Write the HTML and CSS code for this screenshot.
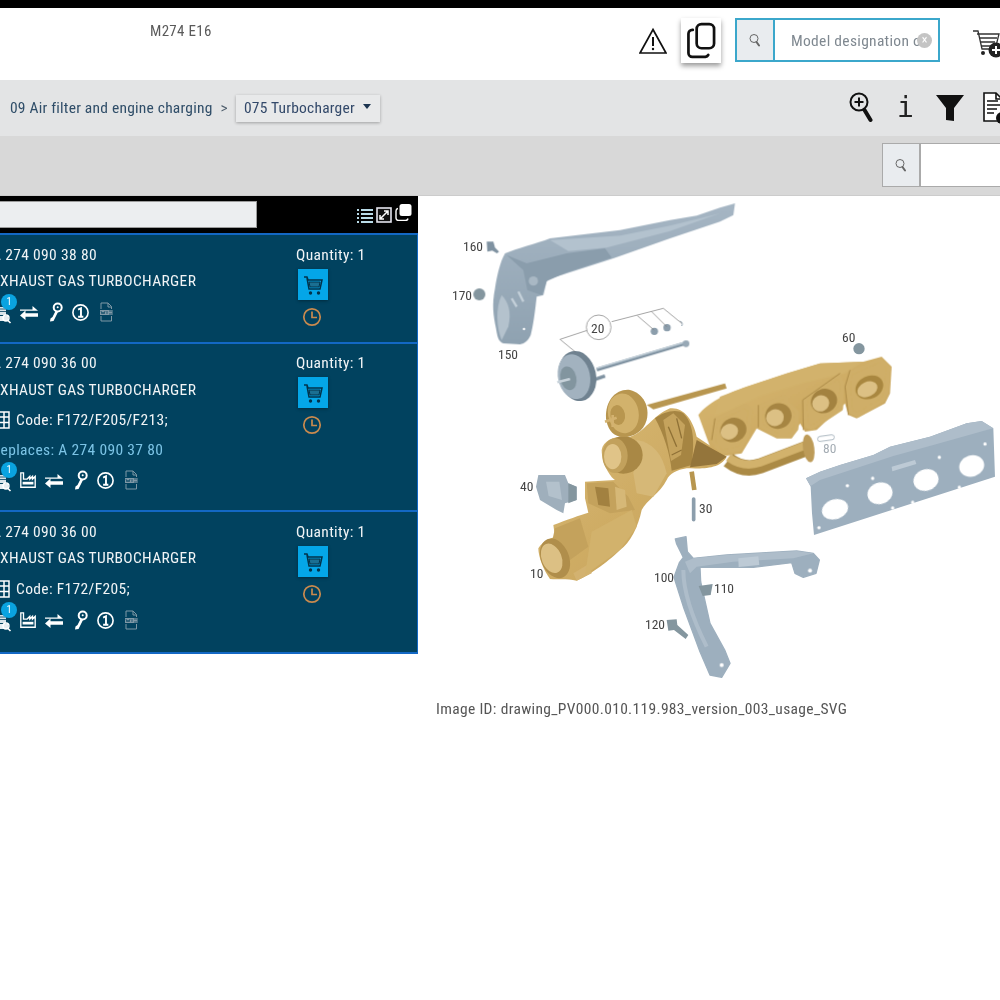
FILE: index.html
```html
<!DOCTYPE html>
<html lang="en">
<head>
<meta charset="utf-8">
<title>Turbocharger parts</title>
<link rel="stylesheet" href="styles.css">
</head>
<body>
<svg class="defs" width="0" height="0" aria-hidden="true">
  <defs>
    <symbol id="i-search" viewBox="0 0 16 16"><circle cx="7" cy="6.500" r="4" fill="none" stroke="currentColor" stroke-width="1"/><path d="M9.500 10l2.500 3.500" stroke="currentColor" stroke-width="2" stroke-linecap="round"/></symbol>
    <symbol id="i-cart" viewBox="0 0 30 30"><path d="M6 7h3l1 3h14l-2 9H11L9 8" fill="none" stroke="#02324a" stroke-width="1.500"/><path d="M11 12h11l-1 5H12z" fill="#1b6f92" stroke="#02324a" stroke-width="1"/><circle cx="12.500" cy="23" r="1.700" fill="#02324a"/><circle cx="20.500" cy="23" r="1.700" fill="#02324a"/></symbol>
    <symbol id="i-clock" viewBox="0 0 20 20"><circle cx="10" cy="10" r="8.200" fill="none" stroke="#c98a4e" stroke-width="1.700"/><path d="M10 4.500V10.500H15" fill="none" stroke="#c98a4e" stroke-width="1.700"/></symbol>
    <symbol id="i-swap" viewBox="0 0 18 18"><path d="M0 6.500h12.500V3L18 7.700H0zM18 10.300H5.500V7.500L0 12.500l5.500 4.500v-3.200H18z" fill="#fff"/></symbol>
    <symbol id="i-key" viewBox="0 0 14 20"><circle cx="8.700" cy="5.500" r="4" fill="none" stroke="#fff" stroke-width="2"/><circle cx="8.700" cy="5.200" r="1" fill="#fff"/><path d="M6.500 9L3.500 15l-2 1.500L1 19.500l3.500-.5L9 10z" fill="#fff"/></symbol>
    <symbol id="i-one" viewBox="0 0 20 20"><circle cx="10" cy="10" r="8" fill="none" stroke="#fff" stroke-width="1.700"/><path d="M7.500 7l3-1.500V14M7.500 14.500h5.500" fill="none" stroke="#fff" stroke-width="2"/></symbol>
    <symbol id="i-wis" viewBox="0 0 14 20"><path d="M2 7V1h7l3.500 3.500V7M2 14v5h10.500v-5" fill="none" stroke="#7f98a6" stroke-width="1"/><path d="M9 1v4h3.500" fill="none" stroke="#7f98a6" stroke-width="1"/><rect x="1" y="8" width="12.500" height="5" fill="#7f98a6"/><path d="M2 9l1 3 1-2 1 2 1-3M8 9v3M10 9h3M10 12h3" stroke="#02415e" stroke-width=".7" fill="none"/></symbol>
    <symbol id="i-factory" viewBox="0 0 20 20"><path d="M2 2v16h16V6l-3 3V6l-3 3V6l-3 3H5V2z" fill="none" stroke="#fff" stroke-width="1.500"/><path d="M4 12h12v3H4z" fill="#fff"/></symbol>
    <symbol id="i-grid" viewBox="0 0 12 18"><path d="M1 1h10v16H1zM1 6h10M1 11.500h10M6 1v16" fill="none" stroke="#fff" stroke-width="1.500"/></symbol>
    <symbol id="i-parts" viewBox="0 0 16 20"><path d="M1 3h9v8H1z" fill="#d8e3e9"/><path d="M1 5h9M1 7.500h9" stroke="#02415e" stroke-width=".8"/><path d="M0 12h12v5H0z" fill="#e6edf1"/><circle cx="10" cy="14" r="3" fill="none" stroke="#fff" stroke-width="1.400"/><path d="M12 16.500l2.500 2.500" stroke="#fff" stroke-width="1.600"/></symbol>
  </defs>
</svg>
<div class="page">
  <div class="topline"></div>
  <header class="header">
    <div class="model">M274 E16</div>
    <div class="actions">
      <svg class="warn" viewBox="0 0 28 28"><path d="M14 2.500L27 26H1z" fill="none" stroke="#111" stroke-width="1.700"/><path d="M14 10v9" stroke="#111" stroke-width="2"/><circle cx="14" cy="22" r="1.200" fill="#111"/></svg>
      <button class="copybtn"><svg viewBox="0 0 30 38" class="copyicon"><rect x="10" y="1.500" width="18" height="25" rx="5" fill="none" stroke="#111" stroke-width="2.800"/><path d="M6 7.500h-.5A4 4 0 0 0 1.500 11.500v20A4 4 0 0 0 5.500 35.500h13.500a4 4 0 0 0 3-2" fill="none" stroke="#111" stroke-width="2.800" stroke-linecap="round"/></svg></button>
      <div class="searchbox">
        <span class="searchcell"><svg class="s16"><use href="#i-search"/></svg></span>
        <span class="placeholder">Model designation o</span>
        <span class="clear">×</span>
      </div>
      <svg class="addcart" viewBox="0 0 32 28"><path d="M0 1h5l4 18h15" fill="none" stroke="#333" stroke-width="1.300"/><path d="M4 4h22l-3 12H8" fill="none" stroke="#333" stroke-width="1.300"/><path d="M7 8h17M8 12h14" stroke="#333" stroke-width="1.300"/><circle cx="10" cy="23" r="2" fill="#222"/><circle cx="23" cy="20" r="7.500" fill="#222"/><path d="M23 16v8M19 20h8" stroke="#fff" stroke-width="2"/></svg>
    </div>
  </header>
  <nav class="crumbs">
    <span class="crumb">09 Air filter and engine charging</span>
    <span class="sep">&gt;</span>
    <span class="drop">075 Turbocharger<i class="caret"></i></span>
    <div class="tools">
      <svg class="t-zoom" viewBox="0 0 24 32"><circle cx="10" cy="10" r="8.500" fill="none" stroke="#111" stroke-width="2"/><path d="M10 5.500v9M5.500 10h9" stroke="#111" stroke-width="2"/><path d="M15.500 18l6 10" stroke="#111" stroke-width="4" stroke-linecap="round"/></svg>
      <span class="t-info">i</span>
      <svg class="t-funnel" viewBox="0 0 28 28"><path d="M0 1h28L18 14v13l-8-1V14z" fill="#111"/></svg>
      <svg class="t-doc" viewBox="0 0 24 32"><path d="M1 1h12l6 6v22H1z" fill="#fff" stroke="#111" stroke-width="1.600"/><path d="M13 1v6h6M4 9h11M4 13h13M4 17h10M4 21h7" fill="none" stroke="#111" stroke-width="1.600"/><circle cx="19" cy="26" r="6" fill="#111"/></svg>
    </div>
  </nav>
  <div class="filterbar">
    <div class="filtersearch">
      <span class="searchcell plain"><svg class="s16"><use href="#i-search"/></svg></span>
    </div>
  </div>
  <main class="content">
    <section class="panel">
      <div class="paneltop">
        <div class="panelinput"></div>
        <svg class="pi" viewBox="0 0 16 16"><path d="M0 2h2v2H0zM4 2h12v2H4zM0 6h2v2H0zM4 6h12v2H4zM0 10h2v2H0zM4 10h12v2H4zM0 14h2v2H0zM4 14h12v2H4z" fill="#b9dbe8"/></svg>
        <svg class="pi" viewBox="0 0 16 16"><rect x="1" y="1" width="14" height="14" fill="#111" stroke="#e4e4ee" stroke-width="1.600"/><path d="M4 12L12 4M8 4h4v4M4 8v4h4" stroke="#fff" stroke-width="1.500" fill="none"/></svg>
        <svg class="pi pi-last" viewBox="0 0 17 17"><path d="M3 4.500A2.500 2.500 0 0 0 1 7v7a2.500 2.500 0 0 0 2.500 2.500h7a2.500 2.500 0 0 0 2.500-2" fill="none" stroke="#fff" stroke-width="1.400"/><rect x="4.500" y="0" width="12" height="12" rx="2.500" fill="#fff"/></svg>
      </div>

      <article class="item item-a">
        <div class="info">
          <div class="line">A 274 090 38 80</div>
          <div class="line">EXHAUST GAS TURBOCHARGER</div>
          <div class="icons">
            <span class="partsicon"><svg class="ic16"><use href="#i-parts"/></svg><b class="badge">1</b></span>
            <svg class="ic18"><use href="#i-swap"/></svg>
            <svg class="ic-key"><use href="#i-key"/></svg>
            <svg class="ic-one"><use href="#i-one"/></svg>
            <svg class="ic-wis"><use href="#i-wis"/></svg>
          </div>
        </div>
        <div class="order">
          <div class="line">Quantity: 1</div>
          <button class="buy buy-a"><svg class="ic-cart"><use href="#i-cart"/></svg></button>
          <svg class="ic-clock"><use href="#i-clock"/></svg>
        </div>
      </article>

      <article class="item item-b">
        <div class="info">
          <div class="line">A 274 090 36 00</div>
          <div class="line">EXHAUST GAS TURBOCHARGER</div>
          <div class="line code"><svg class="ic-grid"><use href="#i-grid"/></svg>Code: F172/F205/F213;</div>
          <div class="line replaces">Replaces: A 274 090 37 80</div>
          <div class="icons">
            <span class="partsicon"><svg class="ic16"><use href="#i-parts"/></svg><b class="badge">1</b></span>
            <svg class="ic-factory"><use href="#i-factory"/></svg>
            <svg class="ic18"><use href="#i-swap"/></svg>
            <svg class="ic-key"><use href="#i-key"/></svg>
            <svg class="ic-one"><use href="#i-one"/></svg>
            <svg class="ic-wis"><use href="#i-wis"/></svg>
          </div>
        </div>
        <div class="order">
          <div class="line">Quantity: 1</div>
          <button class="buy"><svg class="ic-cart"><use href="#i-cart"/></svg></button>
          <svg class="ic-clock"><use href="#i-clock"/></svg>
        </div>
      </article>

      <article class="item item-c">
        <div class="info">
          <div class="line">A 274 090 36 00</div>
          <div class="line">EXHAUST GAS TURBOCHARGER</div>
          <div class="line code"><svg class="ic-grid"><use href="#i-grid"/></svg>Code: F172/F205;</div>
          <div class="icons">
            <span class="partsicon"><svg class="ic16"><use href="#i-parts"/></svg><b class="badge">1</b></span>
            <svg class="ic-factory"><use href="#i-factory"/></svg>
            <svg class="ic18"><use href="#i-swap"/></svg>
            <svg class="ic-key"><use href="#i-key"/></svg>
            <svg class="ic-one"><use href="#i-one"/></svg>
            <svg class="ic-wis"><use href="#i-wis"/></svg>
          </div>
        </div>
        <div class="order">
          <div class="line">Quantity: 1</div>
          <button class="buy"><svg class="ic-cart"><use href="#i-cart"/></svg></button>
          <svg class="ic-clock"><use href="#i-clock"/></svg>
        </div>
      </article>
    </section>

    <figure class="figure">
      <svg class="drawing" viewBox="418 196 582 500">
        <defs>
          <linearGradient id="gold" x1="0" y1="0" x2="1" y2="1"><stop offset="0" stop-color="#d8b974"/><stop offset=".6" stop-color="#cdaa62"/><stop offset="1" stop-color="#b8944f"/></linearGradient>
          <linearGradient id="steel" x1="0" y1="0" x2="0" y2="1"><stop offset="0" stop-color="#a6b6c4"/><stop offset="1" stop-color="#8fa2b1"/></linearGradient>
          <filter id="soft" x="-5%" y="-5%" width="110%" height="110%"><feGaussianBlur stdDeviation="1.200"/></filter>
        </defs>

        <!-- upper-left group -->
        <g transform="translate(440 195) scale(.33333)" filter="url(#soft)">
          <path d="M195 175C230 160 290 145 330 130L540 105 690 75 770 62 840 38 885 25 880 60 840 80 690 130 520 190 380 235C350 245 325 250 320 260L310 300 290 305C285 350 280 390 272 420 265 435 255 445 240 448L190 445C175 440 172 425 168 400 160 360 155 330 165 280 170 245 180 200 195 175Z" fill="url(#steel)"/>
          <path d="M200 180L250 225 262 285 305 300 320 258 380 232 515 188 495 160 380 175 260 205Z" fill="#8a9dac"/>
          <path d="M330 135L540 122 690 92 840 55 690 108 500 158 385 168Z" fill="#b3c2ce"/>
          <path d="M185 300C205 320 215 350 205 395L185 435C170 400 165 340 185 300Z" fill="#b4c2cd"/>
          <path d="M215 310l15 25M235 290l15 30" stroke="#c5d1da" stroke-width="7"/>
          <circle cx="280" cy="258" r="14" fill="#a9b8c4"/>
          <path d="M140 140h20l5 18 12 12-6 5-14-8-15 3z" fill="#7f92a1"/>
          <circle cx="118" cy="298" r="18" fill="#84969f"/>
          <path d="M470 524L735 445" stroke="#7f92a1" stroke-width="11"/>
          <path d="M470 520L735 442" stroke="#bccad4" stroke-width="4"/>
          <circle cx="738" cy="446" r="10" fill="#98a9b6"/>
          <path d="M460 555l35-12" stroke="#7f92a1" stroke-width="10"/>
          <ellipse cx="412" cy="543" rx="56" ry="76" transform="rotate(-12 412 543)" fill="#6f8290"/>
          <ellipse cx="402" cy="545" rx="48" ry="68" transform="rotate(-12 402 545)" fill="#a2b2bf"/>
          <ellipse cx="385" cy="550" rx="24" ry="36" transform="rotate(-12 385 550)" fill="#82959f"/>
          <path d="M352 562l38-10" stroke="#c7d2da" stroke-width="8"/>
          <circle cx="643" cy="409" r="11" fill="#8c9eac"/>
          <circle cx="681" cy="398" r="11" fill="#8c9eac"/>
          <path d="M720 378a10 10 0 0 1 5 15" fill="none" stroke="#8c9eac" stroke-width="3"/>
        </g>
        <g transform="translate(440 195) scale(.33333)">
          <circle cx="252" cy="402" r="3.500" fill="#fff"/>
          <path d="M360 433L475 395M515 380L670 340 725 385M592 362L642 405M635 350L680 395M360 433L405 470" fill="none" stroke="#777" stroke-width="2"/>
          <circle cx="476" cy="397" r="37" fill="#fff" stroke="#777" stroke-width="2"/>
        </g>

        <!-- lower group -->
        <g transform="translate(520 340) scale(.33333)" filter="url(#soft)">
          <path d="M380 195L615 130 620 145 400 208Z" fill="#b8964f"/>

          <!-- manifold -->
          <path d="M535 225C560 190 620 160 680 140L800 100 900 70 1030 65 1085 50 1115 80 1110 160 1095 190 1010 235 985 225 975 190 890 270 855 275 840 250 815 295 770 295 710 265 665 340 600 350 570 320Z" fill="url(#gold)"/>
          <path d="M600 170L680 140 800 100 900 70 1030 65 975 100 850 130 720 170 640 210 580 230Z" fill="#d2b26c"/>
          <g fill="#cfae67" stroke="#cfae67" stroke-width="14" stroke-linejoin="round">
            <path d="M992 100L1080 60 1106 82 1100 160 1088 182 1012 226 992 216 985 140Z"/>
            <path d="M857 175L958 108 968 132 962 206 875 264 860 258 855 210Z"/>
            <path d="M722 200L790 172 832 218 828 266 812 287 772 287 722 256Z"/>
            <path d="M587 240L675 198 692 213 683 288 660 328 604 338 580 306Z"/>
          </g>
          <g fill="none" stroke="#ad8b47" stroke-width="3">
            <path d="M985 225L975 140 990 90M850 270L848 180 960 100M715 262L715 195M575 300L585 235"/>
          </g>
          <ellipse cx="1048" cy="142" rx="43" ry="34" transform="rotate(-25 1048 142)" fill="#a9873f"/>
          <ellipse cx="1042" cy="148" rx="32" ry="22" transform="rotate(-25 1042 148)" fill="#dcc084"/>
          <ellipse cx="912" cy="183" rx="40" ry="36" transform="rotate(-25 912 183)" fill="#a38240"/>
          <ellipse cx="902" cy="190" rx="26" ry="24" transform="rotate(-25 902 190)" fill="#dcc084"/>
          <ellipse cx="775" cy="228" rx="40" ry="38" transform="rotate(-25 775 228)" fill="#a68543"/>
          <ellipse cx="765" cy="233" rx="27" ry="25" transform="rotate(-25 765 233)" fill="#dcc084"/>
          <ellipse cx="640" cy="270" rx="40" ry="36" transform="rotate(-25 640 270)" fill="#a68543"/>
          <ellipse cx="628" cy="275" rx="27" ry="23" transform="rotate(-25 628 275)" fill="#dcc084"/>

          <!-- exhaust pipe -->
          <path d="M625 360Q670 395 720 378L860 325" fill="none" stroke="#ab8a45" stroke-width="46"/>
          <path d="M625 352Q670 385 720 368L860 315" fill="none" stroke="#d2b26c" stroke-width="24"/>
          <ellipse cx="866" cy="325" rx="17" ry="42" transform="rotate(-8 866 325)" fill="#bd9b58"/>

          <!-- turbo body -->
          <path d="M245 330C250 300 290 285 330 290 370 280 400 225 450 205 490 200 520 240 530 290L620 350C600 390 540 385 500 385 470 390 450 400 440 420 420 460 380 480 365 510 355 560 330 610 300 630 260 670 200 710 170 722 140 715 110 720 90 717 70 690 55 650 55 625 70 600 95 595 105 590L100 555C140 540 180 525 205 518L195 475 195 425 285 420C270 410 245 370 245 330Z" fill="url(#gold)"/>
          <path d="M405 235C430 215 470 205 490 220 520 250 525 300 515 375L455 392C450 340 430 280 405 235Z" fill="#a68543"/>
          <path d="M430 240l30-20 35 35-12 90-30 18z" fill="#c5a35d"/>
          <path d="M445 260l25 60M470 235l15 60M455 345l30-15" stroke="#8f7136" stroke-width="4" fill="none"/>
          <path d="M530 300L620 350 590 372 510 382Z" fill="#94743a"/>
          <path d="M350 300Q420 310 440 400L400 470 350 460 340 400Z" fill="#d6b877"/>
          <path d="M200 430L280 425 325 470 345 510 270 520 205 490Z" fill="#c4a25c"/>
          <path d="M225 440l40 5 5 55-35-5z" fill="#a28140"/>
          <path d="M285 440l30 10 5 50-30 10z" fill="#d6b877"/>
          <path d="M105 565L180 535 205 620 150 660 95 610Z" fill="#c4a25c"/>
          <path d="M160 700l50-30 5 30-45 22z" fill="#d3b26f"/>
          <path d="M215 575L335 510 350 560 300 630 195 705Z" fill="#d2b26c"/>
          <ellipse cx="105" cy="655" rx="42" ry="62" transform="rotate(-22 105 655)" fill="#b08e4b"/>
          <ellipse cx="95" cy="655" rx="30" ry="46" transform="rotate(-22 95 655)" fill="#dcc084"/>
          <ellipse cx="310" cy="345" rx="58" ry="56" fill="#a98845"/>
          <ellipse cx="285" cy="347" rx="38" ry="52" fill="#c2a15c"/>
          <ellipse cx="278" cy="350" rx="26" ry="38" fill="#e0c488"/>

          <!-- actuator -->
          <path d="M258 235C255 180 290 145 330 150 370 160 390 200 380 240 370 280 330 295 300 290 275 285 262 265 258 235Z" fill="#b8964f"/>
          <ellipse cx="310" cy="220" rx="46" ry="60" transform="rotate(-10 310 220)" fill="#d2b26c"/>
          <ellipse cx="293" cy="225" rx="22" ry="30" transform="rotate(-10 293 225)" fill="#b8964f"/>
          <path d="M255 245l35-12M278 225v36" stroke="#d3b26f" stroke-width="8"/>

          <!-- flange stud -->
          <path d="M515 395l8 55" stroke="#b8964f" stroke-width="14"/>

          <!-- part 40 -->
          <path d="M55 405L135 405 145 430 170 440 170 480 135 490 130 520 110 510 60 480 48 440Z" fill="#9fafbc"/>
          <path d="M78 425h40l8 55-40-12z" fill="#b3c1cc"/>
          <path d="M145 430l25 10v40l-25 10z" fill="#84969f"/>

          <!-- part 30 -->
          <path d="M521 477v62" stroke="#8c9eac" stroke-width="11" stroke-linecap="round"/>

          <!-- gasket -->
          <path d="M858 415L900 395 960 375 1060 345 1110 320 1230 290 1340 250 1385 243 1420 265 1425 410 882 585 876 520 872 440Z" fill="#9dafbe"/>
          <path d="M858 415L900 395 960 375 1060 345 1110 320 1230 290 1340 250 1385 243 1420 265 1400 270 1240 315 1120 348 900 420 872 438Z" fill="#aebdca"/>
          <path d="M1115 380l70-20 4 12-72 22z" fill="#bdcad5"/>

          <!-- bracket -->
          <path d="M466 597L498 590 502 635 520 655 620 645 830 633 880 640 898 660 888 700 850 712 825 700 815 668 700 682 540 682 542 725 570 850 615 932 630 970 605 1012 570 1005 540 935 490 800 462 712 478 668 490 652 470 612Z" fill="#9dafbe" stroke="#9dafbe" stroke-width="4" stroke-linejoin="round"/>
          <path d="M495 665L520 655 620 645 830 633 880 640 820 655 640 665 530 680 510 700Z" fill="#aebdca"/>
          <path d="M655 655l60-6 3 26-62 6z" fill="#bdcad5"/>
          <path d="M490 690Q490 780 560 920" fill="none" stroke="#aebdca" stroke-width="12"/>

          <!-- bolts -->
          <path d="M536 738L578 732 572 765 548 768Z" fill="#84969f"/>
          <path d="M440 840L470 838 472 855 505 885 497 897 462 870 445 872Z" fill="#84969f"/>
          <circle cx="1017" cy="26" r="17" fill="#84969f"/>
        </g>
        <g transform="translate(520 340) scale(.33333)">
          <rect x="893" y="287" width="50" height="15" rx="7" transform="rotate(-8 918 295)" fill="#fff" stroke="#aeb9c2" stroke-width="3"/>
          <g fill="#fff">
            <ellipse cx="945" cy="508" rx="40" ry="30" transform="rotate(-18 945 508)"/>
            <ellipse cx="1080" cy="460" rx="38" ry="32" transform="rotate(-18 1080 460)"/>
            <ellipse cx="1218" cy="420" rx="38" ry="32" transform="rotate(-18 1218 420)"/>
            <ellipse cx="1355" cy="378" rx="38" ry="32" transform="rotate(-18 1355 378)"/>
            <circle cx="982" cy="437" r="5"/><circle cx="1058" cy="415" r="5"/><circle cx="1258" cy="352" r="5"/><circle cx="1395" cy="312" r="5"/>
            <circle cx="897" cy="563" r="5"/><circle cx="1118" cy="504" r="5"/><circle cx="1178" cy="487" r="5"/><circle cx="1318" cy="442" r="5"/>
            <circle cx="870" cy="692" r="6"/><circle cx="605" cy="975" r="6"/>
          </g>
        </g>

        <g class="labels">
          <text x="463" y="251">160</text>
          <text x="452" y="300">170</text>
          <text x="498" y="359">150</text>
          <text x="591" y="333">20</text>
          <text x="842" y="342">60</text>
          <text class="faint" x="823" y="453">80</text>
          <text x="520" y="491">40</text>
          <text x="699" y="513">30</text>
          <text x="530" y="578">10</text>
          <text x="654" y="582">100</text>
          <text x="714" y="593">110</text>
          <text x="645" y="629">120</text>
        </g>
      </svg>
      <figcaption class="caption">Image ID: drawing_PV000.010.119.983_version_003_usage_SVG</figcaption>
    </figure>
  </main>
</div>
</body>
</html>
```
FILE: styles.css
```css
* { box-sizing: border-box; }
html, body { margin: 0; height: 100%; background: #fff; overflow: hidden; }
body { font-family: Roboto, "Liberation Sans", sans-serif; font-stretch: 85%; }
.defs { display: block; height: 0; }
.page { width: 1020px; filter: blur(.35px); }

.topline { height: 8px; background: #000; }

.header { height: 72px; display: flex; align-items: flex-start; padding-right: 15px; }
.model { margin: 15px 0 0 150px; font-size: 15px; letter-spacing: .3px; line-height: 17px; color: #5a5a5a; }
.actions { margin-left: auto; display: flex; align-items: flex-start; }
.warn { width: 28px; height: 28px; margin: 19px 14px 0 0; }
.copybtn { width: 40px; height: 45px; margin-top: 10px; padding: 0; border: 0; background: #fff; box-shadow: 0 3px 5px rgba(0,0,0,.4); display: flex; align-items: center; justify-content: center; }
.copyicon { width: 29px; height: 38px; }
.searchbox { width: 205px; height: 44px; margin: 10px 0 0 14px; border: 2px solid #3ba7cb; display: flex; align-items: center; background: #fff; position: relative; }
.searchcell { width: 38px; height: 100%; background: #e9ecef; display: flex; align-items: center; justify-content: center; color: #666; flex: none; border-right: 2px solid #3ba7cb; }
.searchcell.plain { border-right: 2px solid #aaa; }
.s16 { width: 16px; height: 16px; }
.placeholder { margin-left: 16px; padding-top: 1px; font-size: 15.500px; letter-spacing: .3px; color: #7f8890; white-space: nowrap; overflow: hidden; width: 134px; }
.clear { position: absolute; left: 180px; top: 13px; width: 15px; height: 15px; border-radius: 50%; background: #c4c4c4; color: #fff; font-size: 12px; line-height: 14px; text-align: center; }
.addcart { width: 32px; height: 28px; margin: 22px 0 0 33px; }

.crumbs { height: 56px; background: #e3e4e5; display: flex; align-items: center; padding: 0 13px 0 10px; font-size: 15.500px; letter-spacing: .22px; color: #2f4d68; }
.sep { margin-left: 8px; color: #4f5f6d; }
.drop { margin-left: 8px; height: 27px; width: 144px; padding-left: 8px; line-height: 27px; background: #e8e9ea; box-shadow: 0 1px 3px rgba(0,0,0,.3); display: flex; align-items: center; color: #33496a; }
.caret { margin: -4px 0 0 8px; width: 0; height: 0; border: 4.500px solid transparent; border-top: 5px solid #1c3550; border-bottom: 0; }
.tools { margin-left: auto; display: flex; align-items: center; }
.t-zoom { width: 24px; height: 32px; }
.t-info { margin-left: 24px; width: 13px; font-family: "DejaVu Sans Mono", monospace; font-size: 28px; line-height: 32px; color: #222; font-stretch: normal; letter-spacing: 0; }
.t-funnel { margin-left: 26px; width: 28px; height: 28px; }
.t-doc { margin-left: 19px; width: 24px; height: 32px; }

.filterbar { height: 60px; background: #d8d8d8; border-bottom: 1px solid #ccc; display: flex; justify-content: flex-end; align-items: center; padding-bottom: 1px; }
.filtersearch { width: 138px; height: 44px; background: #fff; border: 1.500px solid #aaa; display: flex; }

.content { display: flex; align-items: flex-start; }
.panel { width: 418px; flex: none; background: #000; }
.paneltop { height: 37px; display: flex; align-items: center; padding-right: 6px; }
.panelinput { width: 257px; height: 27px; margin-right: auto; background: #eceef0; border: 1px solid #9b9b9b; border-left: 0; }
.pi { width: 16px; height: 16px; margin-right: 3px; }
.pi-last { width: 17px; height: 17px; margin: -4px 0 0 0; }

.item { display: grid; grid-template-columns: 296px 1fr; background: #01425f; border: 2px solid #1368c4; border-width: 2px 1.500px 0 0; color: #f1f4f6; padding-top: 10px; font-size: 15.500px; }
.item-a { height: 109px; }
.item-b { height: 168px; padding-top: 9px; }
.item-c { height: 144px; border-bottom-width: 2px; }
.info { margin-left: -8px; min-width: 0; }
.line { height: 20px; line-height: 20px; margin-bottom: 6px; white-space: nowrap; letter-spacing: .35px; }
.item-b .line:nth-child(2) { margin-top: 7px; }
.order .line { margin-bottom: 4px; }
.code, .replaces { margin: 10px 0 0; }
.code { display: flex; align-items: center; }
.replaces { color: #7cc4e6; }
.icons { height: 20px; margin-top: 10px; display: flex; align-items: center; }
.item-a .icons { margin-top: 11px; }
.item-c .code { margin-top: 11px; }
.item-c .icons { margin-top: 11px; }
.partsicon { position: relative; width: 20px; height: 20px; display: block; flex: none; margin-right: 7px; }
.ic16 { width: 16px; height: 20px; position: absolute; left: 4px; top: 2px; }
.badge { position: absolute; left: 9px; top: -8px; width: 16px; height: 16px; border-radius: 50%; background: #0aa3e0; color: #fff; font-size: 10.500px; font-weight: 400; line-height: 16px; text-align: center; letter-spacing: 0; }
.ic18 { width: 18px; height: 18px; margin-left: 1px; }
.ic-key { width: 14px; height: 20px; margin-left: 11px; }
.ic-one { width: 19px; height: 19px; margin-left: 8px; }
.ic-wis { width: 14px; height: 20px; margin-left: 9px; }
.ic-factory { width: 18px; height: 20px; margin: 0 7px 0 0; flex: none; }
.ic-grid { width: 12px; height: 18px; margin: 0 6px 0 6px; flex: none; }
.order { display: flex; flex-direction: column; align-items: flex-start; }
.buy { width: 30px; height: 31px; margin-left: 2px; padding: 0; border: 0; background: #04a6e8; box-shadow: 0 1px 3px rgba(0,0,0,.35); }
.ic-cart { width: 30px; height: 30px; display: block; }
.ic-clock { width: 20px; height: 20px; margin: 7px 0 0 6px; }

.figure { margin: 0; flex: 1; min-width: 0; }
.drawing { display: block; width: 582px; height: 500px; }
.labels text { font-family: Roboto, sans-serif; font-stretch: 85%; font-size: 13.500px; fill: #444; }
.labels .faint { fill: #a5adb4; }
.caption { margin: 4px 0 0 18px; font-size: 15.500px; letter-spacing: .33px; color: #555; white-space: nowrap; }
```
